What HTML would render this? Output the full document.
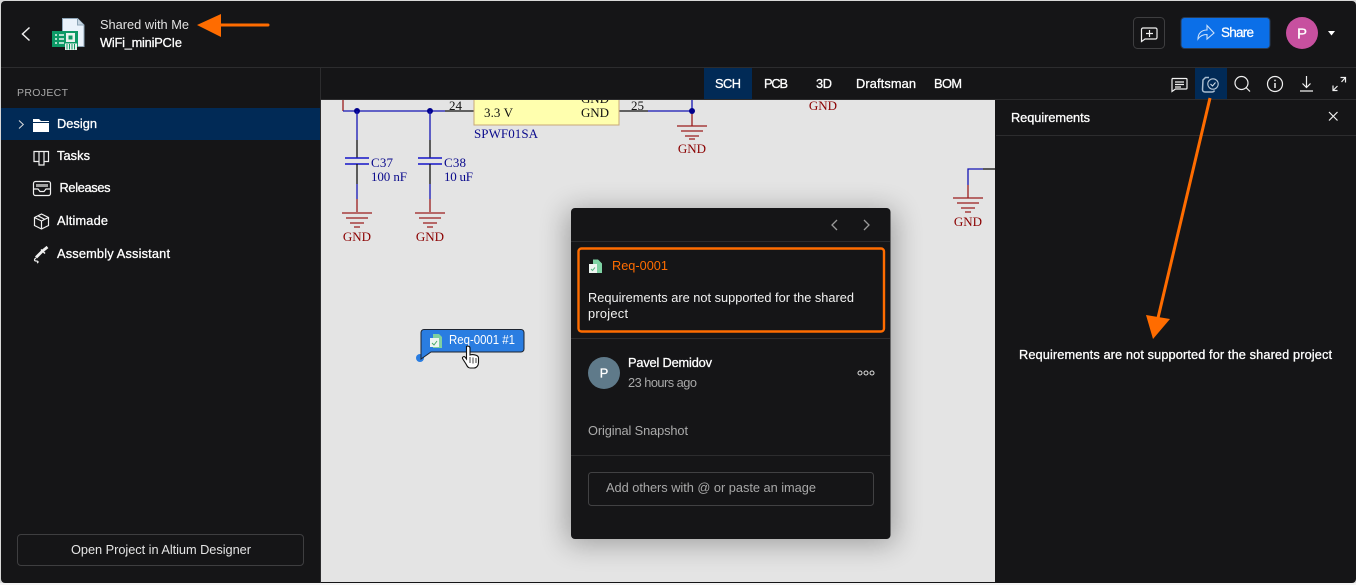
<!DOCTYPE html>
<html><head><meta charset="utf-8"><style>
html,body{margin:0;padding:0;background:#e8e8e8;width:1356px;height:585px;overflow:hidden}
svg{display:block}
text{font-family:"Liberation Sans",sans-serif;font-size:12.8px;fill:#fff}
text.s{font-family:"Liberation Serif",serif;font-size:13px}
text.b{stroke:#fff;stroke-width:.28px}
.w{fill:none;stroke-width:1.3}
.blue{stroke:#1414b4}.blk{stroke:#111}.red{stroke:#9a1c1c}
.ico{fill:none;stroke:#f0f0f0;stroke-width:1.2}
</style></head><body>
<svg width="1356" height="585" viewBox="0 0 1356 585" xmlns="http://www.w3.org/2000/svg">
<defs>
<filter id="sh" x="-20%" y="-20%" width="140%" height="140%"><feGaussianBlur stdDeviation="14"/></filter>
<clipPath id="cv"><rect x="321" y="100" width="674" height="482"/></clipPath>
</defs>
<rect width="1356" height="585" fill="#d8d8d8"/>
<rect x="1" y="1" width="1355" height="582" rx="4" fill="#151517"/>
<rect y="583" width="1356" height="2" fill="#f4f4f4"/>
<!-- lines -->
<rect x="1" y="67" width="1355" height="1" fill="#2c2c2e"/>
<rect x="320" y="68" width="1" height="515" fill="#2c2c2e"/>
<rect x="321" y="99" width="1035" height="1" fill="#2c2c2e"/>
<rect x="996" y="135" width="360" height="1" fill="#2c2c2e"/>
<!-- canvas -->
<rect x="321" y="100" width="674" height="482" fill="#e4e4e4"/>
<g clip-path="url(#cv)">
<path class="w red" d="M343 100V111"/>
<path class="w blue" d="M343 111H445"/>
<path class="w blk" d="M445 111H474"/>
<path class="w blk" d="M619 111H648"/>
<path class="w blue" d="M648 111H692V98"/>
<path class="w red" d="M692 111V126"/>
<circle cx="357" cy="111" r="3" fill="#00008c"/><circle cx="430" cy="111" r="3" fill="#00008c"/><circle cx="692" cy="111" r="3" fill="#00008c"/>
<g>
<path class="w blue" d="M357 111V140"/><path class="w blk" d="M357 140V158"/>
<path d="M345 158H369M345 164H369" stroke="#1414c8" stroke-width="1.6" fill="none"/>
<path class="w blk" d="M357 164V184"/><path class="w blue" d="M357 184V199"/><path class="w red" d="M357 199V212"/>
<path class="w red" d="M342 213H372M346 218H368M350 223H364M354 227H360"/>
<text class="s" x="357" y="241" text-anchor="middle" style="fill:#8b0000">GND</text>
</g>
<g transform="translate(73 0)">
<path class="w blue" d="M357 111V140"/><path class="w blk" d="M357 140V158"/>
<path d="M345 158H369M345 164H369" stroke="#1414c8" stroke-width="1.6" fill="none"/>
<path class="w blk" d="M357 164V184"/><path class="w blue" d="M357 184V199"/><path class="w red" d="M357 199V212"/>
<path class="w red" d="M342 213H372M346 218H368M350 223H364M354 227H360"/>
<text class="s" x="357" y="241" text-anchor="middle" style="fill:#8b0000">GND</text>
</g>
<text class="s" x="371" y="167" textLength="22" style="fill:#0a0a8c">C37</text>
<text class="s" x="371" y="181" textLength="36" style="fill:#0a0a8c">100 nF</text>
<text class="s" x="444" y="167" textLength="22" style="fill:#0a0a8c">C38</text>
<text class="s" x="444" y="181" textLength="29" style="fill:#0a0a8c">10 uF</text>
<rect x="474" y="96" width="145" height="29" fill="#ffffae" stroke="#c8a878" stroke-width="1"/>
<text class="s" x="484" y="117" textLength="29" style="fill:#111">3.3 V</text>
<text class="s" x="581" y="117" textLength="28" style="fill:#111">GND</text>
<text class="s" x="581" y="103" textLength="28" style="fill:#111">GND</text>
<text class="s" x="449" y="110" textLength="13" style="fill:#111">24</text>
<text class="s" x="631" y="110" textLength="13" style="fill:#111">25</text>
<text class="s" x="474" y="138" textLength="64" style="fill:#0a0a8c">SPWF01SA</text>
<path class="w red" d="M677 126H707M681 131H703M685 136H699M689 139H695"/>
<text class="s" x="692" y="153" text-anchor="middle" style="fill:#8b0000">GND</text>
<text class="s" x="823" y="110" text-anchor="middle" style="fill:#8b0000">GND</text>
<path class="w blue" d="M983 169H968V185"/><path class="w blk" d="M983 169H995"/>
<path class="w red" d="M968 185V198M953 198H983M957 203H979M961 208H975M965 212H971"/>
<text class="s" x="968" y="226" text-anchor="middle" style="fill:#8b0000">GND</text>
<!-- popup shadow -->
<rect x="567" y="210" width="328" height="334" rx="6" fill="#000" opacity=".3" filter="url(#sh)"/>
</g>
<!-- tag -->
<circle cx="420" cy="358" r="4" fill="#2a7de1"/>
<path d="M424 329.500H521a3 3 0 0 1 3 3V349a3 3 0 0 1-3 3H431L421 359V332.500a3 3 0 0 1 3-3Z" fill="#2a7de1" stroke="#1d2430" stroke-width="1"/>
<path d="M433 334h6l3 3v11h-9z" fill="#7fd0a0"/><path d="M430 338h9v9h-9z" fill="#eef4f2"/><path d="M432 343l2 2 3-4" fill="none" stroke="#4aa96c"/>
<text x="449" y="344" textLength="66" lengthAdjust="spacingAndGlyphs">Req-0001 #1</text>
<!-- cursor -->
<path d="M466.500 346.500c1.500-1 3.500 0 3.500 1.500v7c2.500-1 8 0 8.500 2.500v5c0 3-2 5.500-4.500 5.500h-4c-2 0-3-2-4-4l-3.500-5.500c-.5-1.500 1.500-2.500 2.500-1.500l1.500 2Z" fill="#fff" stroke="#111" stroke-width="1.100"/>
<path d="M470 357v6M473 357.500v6M476 358v5" stroke="#111" stroke-width=".8"/>
<!-- sidebar -->
<text x="17" y="96" textLength="51" style="fill:#a8a8a8;font-size:10.500px">PROJECT</text>
<rect x="1" y="108" width="319" height="32" fill="#012a56"/>
<path d="M19 120.500l4.300 4-4.300 4" fill="none" stroke="#ddd" stroke-width="1"/>
<path d="M33 119h6l2 2h8v11H33z" fill="#fff"/><rect x="33" y="122" width="16" height="1" fill="#012a56"/>
<text class="b" x="57" y="128" textLength="40">Design</text>
<path class="ico" d="M34 151.500h5v10h-5zM39 151.500h5v13.500h-5zM44 151.500h4.500v10H44z" stroke-width="1.100"/>
<text class="b" x="57" y="160" textLength="33">Tasks</text>
<rect x="33.500" y="181.500" width="17" height="14" rx="2" class="ico"/>
<rect x="36" y="184" width="12" height="3" fill="#a0a0a0"/>
<path class="ico" d="M34 189h4l2 2.500h4l2-2.500h4"/>
<text class="b" x="59.500" y="192" textLength="51">Releases</text>
<path class="ico" d="M41.500 214l7 3.500v8l-7 3.500-7-3.500v-8zM34.500 217.500l7 3.500 7-3.500M41.500 221v8.500M38 215.800l7 3.700"/>
<text class="b" x="57" y="225" textLength="51">Altimade</text>
<path d="M47.500 247l-5 4-3.500 3.500-3 3" stroke="#f0f0f0" stroke-width="2.800" fill="none"/><path d="M41 249.500l4 4" stroke="#f0f0f0" stroke-width="1.500"/>
<path d="M36 258c-2 1-2 3 0 3s3 1 1 2" class="ico" stroke-width="1"/>
<text class="b" x="57" y="258" textLength="113">Assembly Assistant</text>
<rect x="17.500" y="534.500" width="286" height="31" rx="3.500" fill="none" stroke="#3e3e40"/>
<text x="71" y="554" textLength="180" style="fill:#e4e4e4">Open Project in Altium Designer</text>
<!-- header left -->
<path d="M29.500 27.500l-7 6.500 7 6.500" fill="none" stroke="#eee" stroke-width="1.500"/>
<path d="M62.500 18.500h15l6.500 6.500v21.500H62.500z" fill="#eaf2fb" stroke="#8fa6b8" stroke-width="1"/>
<path d="M77.500 18.500v6.500h6.500" fill="#c6d5e2" stroke="#8fa6b8"/>
<rect x="52" y="31" width="26" height="16" fill="#0c9966"/>
<rect x="66" y="33" width="9" height="9" fill="#e8f2ee"/><rect x="68.500" y="35.500" width="4" height="4" fill="#0c9966"/>
<path d="M55 35h2M59 35h5M55 39h2M59 39h5M55 43h2M59 43h5" stroke="#e5f5ee" stroke-width="1.500"/>
<rect x="65" y="43.500" width="12" height="6.500" fill="#e8f2ee"/><path d="M67 44v5.500M69.500 44v5.500M72 44v5.500M74.500 44v5.500" stroke="#0c9966"/>
<text x="100" y="29" textLength="89" style="fill:#e2e2e2">Shared with Me</text>
<text class="b" x="100" y="47" textLength="82">WiFi_miniPCIe</text>
<!-- header right -->
<rect x="1133.500" y="17.500" width="31" height="31" rx="4" fill="none" stroke="#3e3e40"/>
<path class="ico" d="M1141.500 29.500a1.500 1.500 0 0 1 1.500-1.500h12.500a1.500 1.500 0 0 1 1.500 1.500v8a1.500 1.500 0 0 1-1.500 1.500h-10.500l-3.500 2.500ZM1149.500 30v7M1146 33.500h7"/>
<rect x="1181" y="17.500" width="89" height="31" rx="3.500" fill="#0b6fe8" stroke="#2a3a50"/>
<path d="M1198 39c0-6 4-9 9-9v-4.500l7 7.500-7 6v-4.500c-4 0-7 1.500-9 4.500Z" fill="none" stroke="#cfe2fa" stroke-width="1.100"/>
<text class="b" x="1221" y="37" textLength="33" style="font-size:13.500px">Share</text>
<circle cx="1302" cy="33" r="16" fill="#c7509f"/>
<text class="b" x="1302" y="38.500" text-anchor="middle" style="font-size:15px">P</text>
<path d="M1328 31h7l-3.500 4.500z" fill="#fff"/>
<!-- tabs -->
<rect x="704" y="68" width="48" height="31" fill="#012a56"/>
<text class="b" x="715" y="88" textLength="26">SCH</text>
<text class="b" x="764" y="88" textLength="24">PCB</text>
<text class="b" x="816" y="88" textLength="16">3D</text>
<text class="b" x="856" y="88" textLength="60">Draftsman</text>
<text class="b" x="934" y="88" textLength="28">BOM</text>
<!-- tool icons -->
<rect x="1195" y="68" width="32" height="31" fill="#012a56"/>
<path class="ico" d="M1172 78.500h14a1 1 0 0 1 1 1v8.500a1 1 0 0 1-1 1h-10.500l-3.500 2.500v-12a1 1 0 0 1 1-1ZM1175 82h9M1175 84.500h9M1175 87h6" stroke-width="1.100"/>
<path d="M1209 77.500h-3.500l-2.500 2.500-.5 9.500c0 1.500 1 2.500 2.500 2.500h7c1 0 2-.5 2.500-1.500" fill="none" stroke="#a8bccf" stroke-width="1.500"/>
<circle cx="1213" cy="84" r="5.200" fill="#012a56" stroke="#b8c8d8" stroke-width="1.100"/><path d="M1210.500 84l2 2 3-3.500" fill="none" stroke="#d8e2ec" stroke-width="1"/>
<circle cx="1241.500" cy="83" r="6.500" class="ico" stroke-width="1.300"/><path class="ico" d="M1246 87.500l4 4" stroke-width="1.300"/>
<circle cx="1275" cy="84" r="7.500" class="ico"/><path d="M1275 83v5M1275 79.800v1.500" stroke="#f0f0f0" stroke-width="1.500"/>
<path class="ico" d="M1306.500 76v11M1302.500 83.500l4 4 4-4M1300 91h13" stroke-width="1.400"/>
<path class="ico" d="M1333 90.500l4.500-4.500M1341.500 82l4-4.500M1340.500 77.500h5v5M1333 85.500V90.500h4.500" stroke-width="1.400"/>
<!-- right panel -->
<text class="b" x="1011" y="122" textLength="79">Requirements</text>
<path class="ico" d="M1329 112l8.500 8.500M1337.500 112l-8.500 8.500" stroke-width="1.200"/>
<text class="b" x="1019" y="359" textLength="313">Requirements are not supported for the shared project</text>
<!-- popup -->
<rect x="571" y="208" width="319.500" height="331" rx="4" fill="#151517"/>
<rect x="571" y="241" width="319" height="1" fill="#2c2c2e"/>
<rect x="571" y="338" width="319" height="1" fill="#2c2c2e"/>
<rect x="571" y="455" width="319" height="1" fill="#2c2c2e"/>
<path d="M837 220l-5 5 5 5M864 220l5 5-5 5" fill="none" stroke="#9a9a9a" stroke-width="1.300"/>
<rect x="578.500" y="248.500" width="305.500" height="83" rx="3" fill="none" stroke="#ff6c00" stroke-width="2.400"/>
<path d="M593 259.500h5l4 4v9.500h-9z" fill="#7fd3a4"/><rect x="589" y="264" width="8" height="9" fill="#eef5f1"/><path d="M591 269l1.500 1.500 2.500-3" fill="none" stroke="#5ab784"/>
<text x="612" y="270" textLength="56" lengthAdjust="spacingAndGlyphs" style="fill:#ff6c00;font-size:13px">Req-0001</text>
<text x="588" y="302" textLength="266" style="fill:#f2f2f2">Requirements are not supported for the shared</text>
<text x="588" y="318" textLength="40" style="fill:#f2f2f2">project</text>
<circle cx="604" cy="373" r="16" fill="#5f7a8a"/>
<text class="b" x="604" y="377.500" text-anchor="middle">P</text>
<text class="b" x="628" y="367" textLength="84">Pavel Demidov</text>
<text x="628" y="387" textLength="69" style="fill:#a8a8a8">23 hours ago</text>
<circle cx="860" cy="373" r="2" fill="none" stroke="#ddd" stroke-width="1"/><circle cx="866" cy="373" r="2" fill="none" stroke="#ddd" stroke-width="1"/><circle cx="872" cy="373" r="2" fill="none" stroke="#ddd" stroke-width="1"/>
<text x="588" y="435" textLength="100" style="fill:#ababab">Original Snapshot</text>
<rect x="588.500" y="472.500" width="285" height="33" rx="3" fill="none" stroke="#414143"/>
<text x="606" y="492" textLength="210" style="fill:#a8a8a8">Add others with @ or paste an image</text>
<!-- annotation arrows -->
<path d="M221 25H268" stroke="#ff6c00" stroke-width="3" stroke-linecap="round"/>
<path d="M197 25L221 14V37Z" fill="#ff6c00"/>
<path d="M1210 98L1158 318" stroke="#ff6c00" stroke-width="3"/>
<path d="M1146 315L1170 319L1153 339Z" fill="#ff6c00"/>
</svg>
</body></html>
